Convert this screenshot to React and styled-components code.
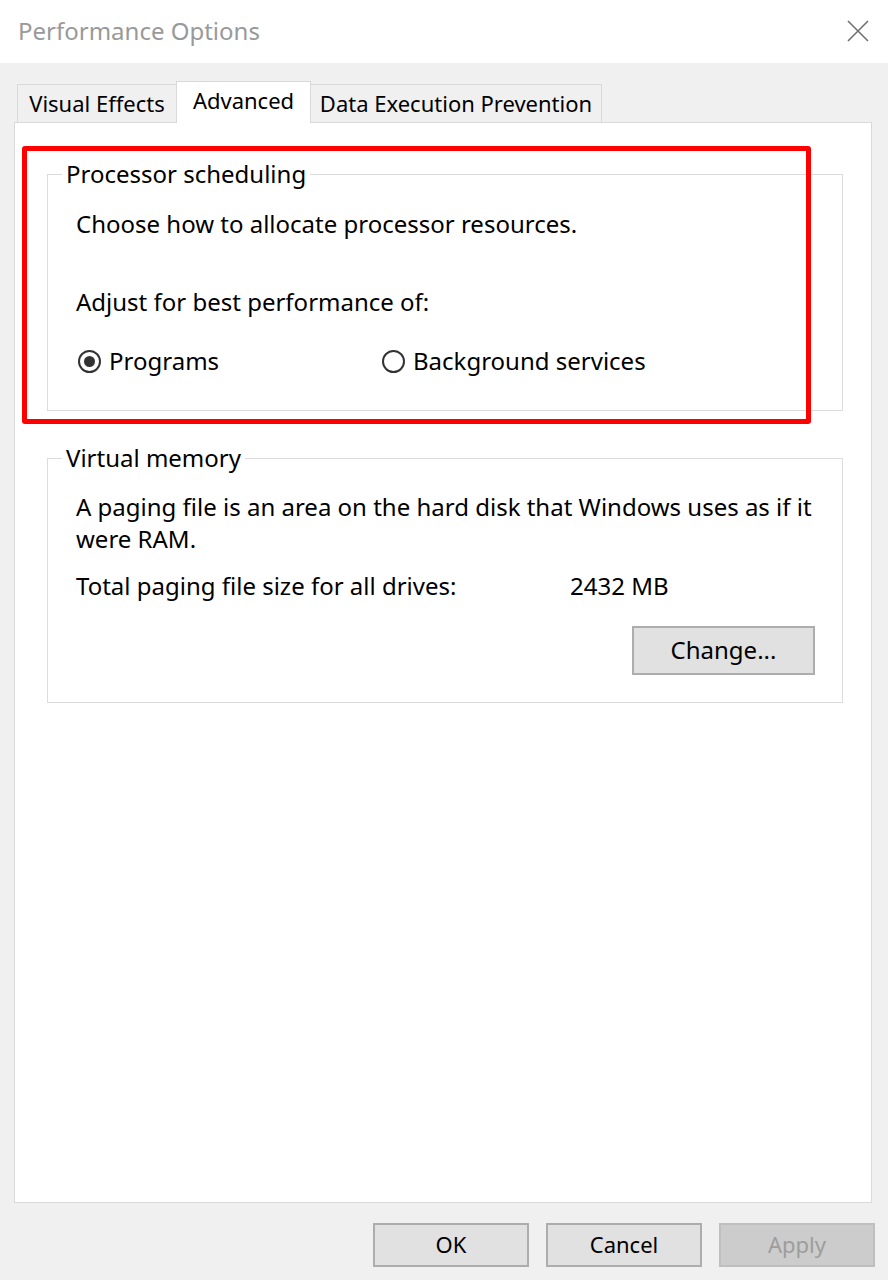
import React from "react";
import styled, { createGlobalStyle } from "styled-components";

const GlobalStyle = createGlobalStyle`
  html, body {
    margin: 0;
    padding: 0;
    background: #f0f0f0;
  }
  * {
    box-sizing: border-box;
  }
`;

const Window = styled.div`
  width: 888px;
  height: 1280px;
  display: flex;
  flex-direction: column;
  background: #f0f0f0;
  font-family: "Noto Sans", "Open Sans", sans-serif;
  font-size: 24px;
  color: #000;
  overflow: hidden;
`;

const TitleBar = styled.div`
  height: 63px;
  flex: none;
  background: #fff;
  display: flex;
  align-items: center;
  justify-content: space-between;
  padding: 0 19px 0 18px;
`;

const Title = styled.div`
  color: #999;
  font-size: 24px;
  margin-top: -2px;
`;

const CloseButton = styled.div`
  width: 22px;
  height: 22px;
  margin-top: -2px;
  display: flex;
`;

const Body = styled.div`
  padding: 18px 16px 0 14px;
`;

const TabRow = styled.div`
  display: flex;
  align-items: flex-end;
  padding-left: 3px;
  margin-bottom: -1px;
  position: relative;
  z-index: 1;
  font-size: 22px;
`;

const Tab = styled.div`
  width: ${(p) => p.$w}px;
  height: ${(p) => (p.$active ? 42 : 39)}px;
  margin-left: ${(p) => (p.$first ? 0 : -1)}px;
  display: flex;
  align-items: center;
  justify-content: center;
  padding-bottom: ${(p) => (p.$active ? 6 : 1)}px;
  background: ${(p) => (p.$active ? "#fff" : "#f0f0f0")};
  border: 1px solid #d9d9d9;
  border-bottom: ${(p) => (p.$active ? "none" : "1px solid #d9d9d9")};
  position: relative;
  z-index: ${(p) => (p.$active ? 2 : 1)};
  white-space: nowrap;
`;

const Panel = styled.div`
  height: 1081px;
  background: #fff;
  border: 1px solid #d9d9d9;
  padding: 37px 28px 0 32px;
  display: flex;
  flex-direction: column;
  gap: 33px;
`;

const GroupWrap = styled.div`
  position: relative;
`;

const Highlight = styled.div`
  position: absolute;
  left: -25px;
  top: -14px;
  width: 789px;
  height: 278px;
  border: 5px solid #ff0000;
  border-radius: 3px;
  pointer-events: none;
`;

const GroupBox = styled.fieldset`
  margin: 0;
  min-width: 0;
  border: 1px solid #dcdcdc;
  padding: ${(p) => p.$pt}px 27px ${(p) => p.$pb}px 28px;
`;

const Legend = styled.legend`
  margin-left: -14px;
  padding: 0 4px 0 4px;
  line-height: 28px;
`;

const Line = styled.div`
  line-height: 32px;
  white-space: nowrap;
  margin-top: ${(p) => p.$mt || 0}px;
`;

const RadioRow = styled.div`
  display: grid;
  grid-template-columns: 304px 1fr;
  margin-top: 27px;
  padding-left: 2px;
`;

const RadioItem = styled.label`
  display: flex;
  align-items: center;
  gap: 8px;
  line-height: 32px;
`;

const RadioCircle = styled.span`
  width: 23px;
  height: 23px;
  border-radius: 50%;
  border: 2px solid #333;
  display: flex;
  align-items: center;
  justify-content: center;
  background: #fff;

  &::after {
    content: "";
    width: 11px;
    height: 11px;
    border-radius: 50%;
    background: ${(p) => (p.$checked ? "#333" : "transparent")};
  }
`;

const SizeRow = styled.div`
  display: grid;
  grid-template-columns: 494px 1fr;
  line-height: 32px;
  margin-top: 15px;
`;

const ButtonRow = styled.div`
  display: flex;
  justify-content: flex-end;
  margin-top: ${(p) => p.$mt || 0}px;
`;

const Button = styled.div`
  width: ${(p) => p.$w}px;
  height: ${(p) => p.$h}px;
  display: flex;
  align-items: center;
  justify-content: center;
  background: ${(p) => (p.$disabled ? "#cccccc" : "#e1e1e1")};
  border: 2px solid ${(p) => (p.$disabled ? "#bfbfbf" : "#adadad")};
  color: ${(p) => (p.$disabled ? "#9d9d9d" : "#000")};
  padding-bottom: 2px;
`;

const Footer = styled.div`
  display: flex;
  justify-content: flex-end;
  gap: 17px;
  padding: 20px 13px 0 0;
  font-size: 22px;
`;

function CloseIcon() {
  return (
    <svg width="22" height="22" viewBox="0 0 22 22">
      <path d="M1 1 L21 21 M21 1 L1 21" stroke="#707070" strokeWidth="1.6" />
    </svg>
  );
}

export default function App() {
  return (
    <>
      <GlobalStyle />
      <Window>
        <TitleBar>
          <Title>Performance Options</Title>
          <CloseButton>
            <CloseIcon />
          </CloseButton>
        </TitleBar>
        <Body>
          <TabRow>
            <Tab $first $w={160}>Visual Effects</Tab>
            <Tab $active $w={135}>Advanced</Tab>
            <Tab $w={292}>Data Execution Prevention</Tab>
          </TabRow>
          <Panel>
            <GroupWrap>
              <GroupBox $pt={20} $pb={33}>
                <Legend>Processor scheduling</Legend>
                <Line>Choose how to allocate processor resources.</Line>
                <Line $mt={46}>Adjust for best performance of:</Line>
                <RadioRow>
                  <RadioItem>
                    <RadioCircle $checked />
                    Programs
                  </RadioItem>
                  <RadioItem>
                    <RadioCircle />
                    Background services
                  </RadioItem>
                </RadioRow>
              </GroupBox>
              <Highlight />
            </GroupWrap>
            <GroupBox $pt={19} $pb={27}>
              <Legend>Virtual memory</Legend>
              <Line>A paging file is an area on the hard disk that Windows uses as if it</Line>
              <Line>were RAM.</Line>
              <SizeRow>
                <span>Total paging file size for all drives:</span>
                <span>2432 MB</span>
              </SizeRow>
              <ButtonRow $mt={24}>
                <Button $w={183} $h={49}>Change...</Button>
              </ButtonRow>
            </GroupBox>
          </Panel>
        </Body>
        <Footer>
          <Button $w={156} $h={44}>OK</Button>
          <Button $w={156} $h={44}>Cancel</Button>
          <Button $w={156} $h={44} $disabled>Apply</Button>
        </Footer>
      </Window>
    </>
  );
}
